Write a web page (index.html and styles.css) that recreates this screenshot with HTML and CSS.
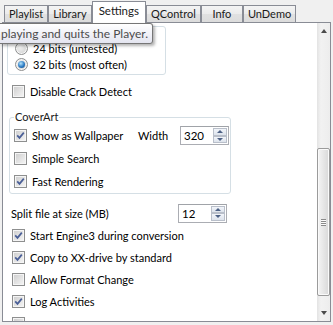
FILE: index.html
```html
<!DOCTYPE html>
<html lang="en">
<head>
    <meta charset="UTF-8">
    <meta name="viewport" content="width=device-width, initial-scale=1.0">
    <title>Settings</title>
    <link rel="stylesheet" href="styles.css">
</head>
<body>
    <div class="window">
        <ul class="tabs">
            <li class="tab">Playlist</li>
            <li class="tab">Library</li>
            <li class="tab active">Settings</li>
            <li class="tab">QControl</li>
            <li class="tab">Info</li>
            <li class="tab">UnDemo</li>
        </ul>

        <div class="panel">
            <div class="page">
                <div class="group bits">
                    <div class="row radio-row"><span class="radio"></span>24 bits (untested)</div>
                    <div class="row radio-row"><span class="radio on"></span>32 bits (most often)</div>
                </div>

                <div class="row check-row"><span class="check"></span>Disable Crack Detect</div>

                <fieldset class="group coverart">
                    <legend>CoverArt</legend>
                    <div class="row">
                        <span class="check on"><svg viewBox="0 0 11 11"><path d="M2.2 5.4 L4.5 7.9 L8.8 2.6"/></svg></span>Show as Wallpaper
                        <span class="width-label">Width</span>
                        <span class="spin"><span class="value">320</span><span class="buttons"><span class="up"></span><span class="down"></span></span></span>
                    </div>
                    <div class="row"><span class="check"></span>Simple Search</div>
                    <div class="row"><span class="check on"><svg viewBox="0 0 11 11"><path d="M2.2 5.4 L4.5 7.9 L8.8 2.6"/></svg></span>Fast Rendering</div>
                </fieldset>

                <div class="row split-row">
                    <span>Split file at size (MB)</span>
                    <span class="spin"><span class="value">12</span><span class="buttons"><span class="up"></span><span class="down"></span></span></span>
                </div>

                <div class="row check-row"><span class="check on"><svg viewBox="0 0 11 11"><path d="M2.2 5.4 L4.5 7.9 L8.8 2.6"/></svg></span>Start Engine3 during conversion</div>
                <div class="row check-row"><span class="check on"><svg viewBox="0 0 11 11"><path d="M2.2 5.4 L4.5 7.9 L8.8 2.6"/></svg></span>Copy to XX-drive by standard</div>
                <div class="row check-row"><span class="check"></span>Allow Format Change</div>
                <div class="row check-row"><span class="check on"><svg viewBox="0 0 11 11"><path d="M2.2 5.4 L4.5 7.9 L8.8 2.6"/></svg></span>Log Activities</div>
                <!-- next option is scrolled out of view -->
                <div class="row check-row"><span class="check"></span></div>
            </div>

            <div class="scrollbar">
                <div class="arrow up"></div>
                <div class="track">
                    <div class="thumb"><span class="grip"></span></div>
                </div>
                <div class="arrow down"></div>
            </div>
        </div>

        <div class="tooltip">playing and quits the Player.</div>
    </div>
</body>
</html>
```

FILE: styles.css
```css
* {
    margin: 0;
    padding: 0;
    box-sizing: border-box;
}

body {
    font-family: 'Lato', 'Noto Sans', sans-serif;
    font-size: 11px;
    color: #000;
    background: #f0f0f0;
    width: 333px;
    height: 325px;
    overflow: hidden;
}

.window {
    position: relative;
    padding: 0 2px 0 2px;
}

/* tab strip */
.tabs {
    list-style: none;
    display: flex;
    align-items: flex-end;
    height: 23px;
    margin-bottom: -1px;
    padding-left: 2px;
    position: relative;
    z-index: 1;
}

.tab {
    height: 17px;
    min-width: 42px;
    margin-bottom: 1px;
    padding: 0 4px;
    line-height: 16px;
    text-align: center;
    border: 1px solid #898c95;
    border-bottom: none;
    background: linear-gradient(#f4f4f4, #ebebeb 50%, #e1e1e1 50%, #dcdcdc);
    color: #1a1a1a;
}

.tab.active {
    height: 22px;
    margin-bottom: 0;
    padding: 0 6px;
    line-height: 18px;
    font-size: 11.5px;
    background: #fff;
}

/* main panel */
.panel {
    display: flex;
    height: 300px;
    border: 1px solid #898c95;
    background: #fff;
}

.page {
    flex: 1;
    overflow: hidden;
}

.row {
    display: flex;
    align-items: center;
    white-space: nowrap;
}

.group {
    border: 1px solid #d5dfe5;
    border-radius: 3px;
}

.bits {
    margin: 3px 0 0 4px;
    width: 159px;
    padding: 13px 0 2px 7px;
}

.radio-row {
    height: 16px;
}

.radio {
    width: 13px;
    height: 13px;
    margin-right: 5px;
    border: 1px solid #8e8f8f;
    border-radius: 50%;
    background: radial-gradient(circle at 35% 35%, #f4f4f4, #d6d6d6 70%);
    box-shadow: inset 0 0 0 1px #f6f6f6;
    position: relative;
}

.radio.on::after {
    content: '';
    position: absolute;
    left: 2px;
    top: 2px;
    width: 7px;
    height: 7px;
    border-radius: 50%;
    background: radial-gradient(circle at 40% 35%, #b6e4fb, #2b7bc4 55%, #17477e);
}

.check-row {
    height: 22px;
    padding-left: 9px;
}

.bits + .check-row {
    margin-top: 5px;
}

.check {
    flex: none;
    width: 13px;
    height: 13px;
    margin-right: 5px;
    border: 1px solid #8e8f8f;
    background: linear-gradient(135deg, #cdcdcd, #f6f6f6);
    box-shadow: inset 0 0 0 1px #f5f5f5;
    display: flex;
    align-items: center;
    justify-content: center;
}

.check svg {
    width: 11px;
    height: 11px;
}

.check path {
    fill: none;
    stroke: #4a5f97;
    stroke-width: 1.7;
}

/* CoverArt box */
.coverart {
    margin: 8px 0 0 6px;
    width: 222px;
    padding: 0 1px 0 4px;
}

.coverart legend {
    padding: 0 1px;
    line-height: 14px;
    color: #1a1a1a;
}

.coverart .row {
    height: 23px;
}

.width-label {
    margin-left: auto;
    width: 42px;
}

.spin {
    display: flex;
    width: 49px;
    height: 19px;
    border: 1px solid #abadb3;
    border-top-color: #a0a3a8;
    background: #fff;
}

.spin .value {
    flex: 1;
    padding-left: 3px;
    line-height: 17px;
    font-size: 11.5px;
}

.spin .buttons {
    display: flex;
    flex-direction: column;
    width: 15px;
    padding: 1px 1px 1px 0;
}

.spin .up,
.spin .down {
    flex: 1;
    border: 1px solid #b9bfca;
    background: linear-gradient(#f2f5fa, #dde3ec);
    display: flex;
    align-items: center;
    justify-content: center;
}

.spin .up::after {
    content: '';
    border: 3px solid transparent;
    border-bottom: 3px solid #4d6185;
    border-top: none;
}

.spin .down::after {
    content: '';
    border: 3px solid transparent;
    border-top: 3px solid #4d6185;
    border-bottom: none;
}

.split-row {
    height: 22px;
    margin-top: 8px;
    padding-left: 8px;
    width: 224px;
    justify-content: space-between;
}

/* scrollbar */
.scrollbar {
    width: 13px;
    display: flex;
    flex-direction: column;
    background: linear-gradient(90deg, #e3e3e3, #f2f2f2 30%, #ededed);
}

.arrow {
    height: 16px;
    display: flex;
    align-items: center;
    justify-content: center;
}

.arrow.up::after {
    content: '';
    border: 3px solid transparent;
    border-bottom: 4px solid #4b4b4b;
    border-top: none;
}

.arrow.down::after {
    content: '';
    border: 3px solid transparent;
    border-top: 4px solid #4b4b4b;
    border-bottom: none;
}

.track {
    flex: 1;
}

.thumb {
    margin-top: 109px;
    height: 148px;
    border: 1px solid #9b9b9b;
    border-radius: 2px;
    background: linear-gradient(90deg, #f4f4f4, #e6e6e6 50%, #d8d8d8);
    box-shadow: inset 0 0 0 1px #fafafa;
    display: flex;
    align-items: center;
    justify-content: center;
}

.grip {
    width: 5px;
    height: 7px;
    background: repeating-linear-gradient(#8a8a8a 0 1px, #fbfbfb 1px 2px);
}

/* tooltip over the page */
.tooltip {
    position: absolute;
    left: 0;
    top: 23px;
    height: 21px;
    padding: 0 4px 0 1px;
    line-height: 19px;
    font-size: 12px;
    border: 1px solid #767676;
    border-left: none;
    border-radius: 0 3px 3px 0;
    background: linear-gradient(#ffffff, #e4e5f0);
    box-shadow: 2px 2px 3px rgba(0, 0, 0, 0.3);
    color: #4c4c4c;
    z-index: 2;
}
```
